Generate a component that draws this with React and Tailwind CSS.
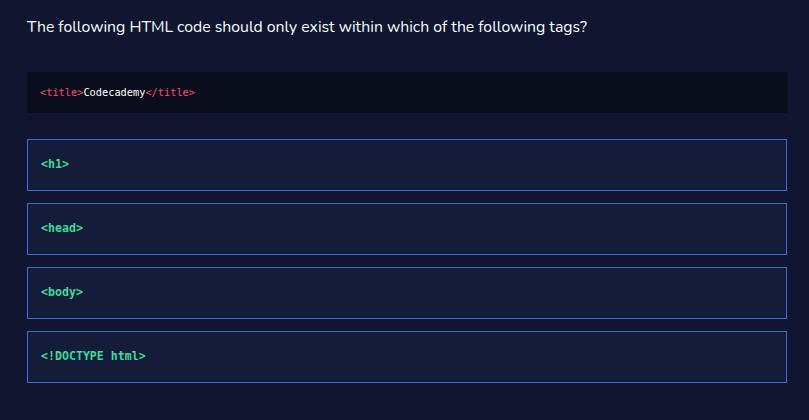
export default function App() {
  const options = ["<h1>", "<head>", "<body>", "<!DOCTYPE html>"];

  return (
    <div className="min-h-[420px] w-full bg-[#10162f] pl-[27px] pr-[22px] pt-[16px] pb-[30px] font-['Nunito','Lato','Noto_Sans',sans-serif]">
      {/* Question */}
      <h2 className="text-[15.8px] leading-[22px] text-[#f5fcff] font-normal">
        The following HTML code should only exist within which of the following tags?
      </h2>

      {/* Code snippet */}
      <div className="mt-[34px] h-[41px] bg-[#0a0d1c] flex items-center px-[13px] font-['DejaVu_Sans_Mono',monospace] text-[10.3px]">
        <span className="text-[#ff4a7a]">&lt;title&gt;</span>
        <span className="text-white">Codecademy</span>
        <span className="text-[#ff4a7a]">&lt;/title&gt;</span>
      </div>

      {/* Answers */}
      <div className="mt-[26px] flex flex-col gap-[12px]">
        {options.map((opt) => (
          <button
            key={opt}
            className="h-[52px] w-full flex items-center px-[13px] bg-[#141c3a] border border-[#3a69dc] text-left font-['DejaVu_Sans_Mono',monospace] font-bold text-[11.6px] text-[#3ddc97]"
          >
            {opt}
          </button>
        ))}
      </div>
    </div>
  );
}
